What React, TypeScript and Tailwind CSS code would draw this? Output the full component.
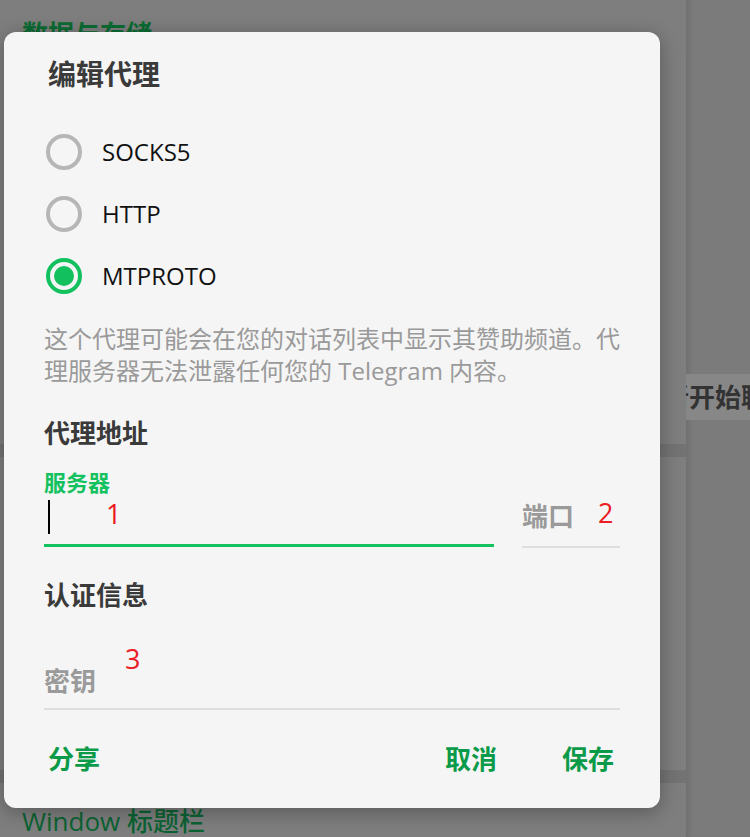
const font = { fontFamily: '"Open Sans", "Noto Sans CJK SC", sans-serif' };

const Radio: React.FC<{ label: string; checked?: boolean }> = ({ label, checked }) => (
  <div className="flex h-[62px] items-center">
    <span
      className={`ml-[2px] flex h-[36px] w-[36px] items-center justify-center rounded-full border-[4px] ${
        checked ? "border-[#12c15e]" : "border-[#b6b6b6]"
      }`}
    >
      {checked && <span className="h-[20px] w-[20px] rounded-full bg-[#12c15e]" />}
    </span>
    <span className="ml-[20px] text-[24px] leading-[32px] text-[#111]">{label}</span>
  </div>
);

const Mark: React.FC<{ n: string; className: string }> = ({ n, className }) => (
  <span className={`absolute text-[27px] font-normal leading-[30px] text-[#ec1c24] ${className}`}>{n}</span>
);

export default function App() {
  return (
    <div className="relative flex h-[837px] w-[750px] overflow-hidden bg-[#7e7e7e]" style={font}>
      {/* fondo: panel izquierdo */}
      <div className="flex w-[686px] shrink-0 flex-col">
        <div className="pl-[22px] pt-[18px] text-[26px] font-bold leading-[32px] text-[#0b6b33]">数据与存储</div>
        <div className="h-[395px]" />
        <div className="h-[13px] bg-[#737373]" />
        <div className="h-[314px]" />
        <div className="h-[13px] bg-[#737373]" />
        <div className="whitespace-nowrap pl-[22px] pt-[22px] text-[26px] font-medium leading-[32px] text-[#0b6333]">
          Window 标题栏
        </div>
      </div>

      {/* fondo: panel derecho */}
      <div className="flex min-w-0 flex-1 flex-col bg-[#7b7b7b] shadow-[inset_6px_0_6px_-4px_rgba(0,0,0,0.12)]">
        <div className="h-[374px]" />
        <div className="flex h-[46px] items-center overflow-hidden bg-[#878787]">
          <span className="-ml-[23px] whitespace-nowrap text-[26px] font-bold text-[#333]">新开始聊天</span>
        </div>
      </div>

      {/* dialogo */}
      <div className="absolute left-[4px] top-[32px] w-[656px] rounded-[12px] bg-[#f5f5f5] px-[40px] pb-[25px] pt-[26px] shadow-[0_4px_20px_rgba(0,0,0,0.3)]">
        <h2 className="ml-[4px] text-[28px] font-bold leading-[32px] text-[#3a3a3a]">编辑代理</h2>

        <div className="mt-[31px]">
          <Radio label="SOCKS5" />
          <Radio label="HTTP" />
          <Radio label="MTPROTO" checked />
        </div>

        <div className="mt-[16px] text-[24px] leading-[32px] text-[#9a9a9a]">
          <div className="whitespace-nowrap">这个代理可能会在您的对话列表中显示其赞助频道。代</div>
          <div className="whitespace-nowrap">理服务器无法泄露任何您的 Telegram 内容。</div>
        </div>

        <div className="mt-[28px] text-[26px] font-bold leading-[36px] text-[#3a3a3a]">代理地址</div>

        <div className="mt-[18px] flex items-end gap-[28px]">
          <div className="flex w-[450px] flex-col">
            <span className="text-[22px] font-bold leading-[26px] text-[#14c15f]">服务器</span>
            <div className="relative h-[52px] border-b-[3px] border-[#14c15f]">
              <span className="absolute left-[4px] top-[5px] h-[34px] w-[2px] bg-black" />
              <Mark n="1" className="left-[62px] top-[4px]" />
            </div>
          </div>
          <div className="relative mb-[-1px] w-[98px] border-b-2 border-[#dedede] pb-[14px]">
            <span className="text-[26px] font-bold leading-[26px] text-[#9a9a9a]">端口</span>
            <Mark n="2" className="left-[76px] top-[-5px]" />
          </div>
        </div>

        <div className="mt-[30px] text-[26px] font-bold leading-[36px] text-[#3a3a3a]">认证信息</div>

        <div className="relative flex h-[97px] items-end border-b-2 border-[#dedede] pb-[14px]">
          <span className="text-[26px] font-bold leading-[26px] text-[#9a9a9a]">密钥</span>
          <Mark n="3" className="left-[81px] top-[31px]" />
        </div>

        <div className="mt-[25px] flex h-[48px] items-center text-[26px] font-bold text-[#0a9a48]">
          <button className="ml-[4px]">分享</button>
          <button className="ml-auto">取消</button>
          <button className="ml-[65px] mr-[6px]">保存</button>
        </div>
      </div>
    </div>
  );
}
